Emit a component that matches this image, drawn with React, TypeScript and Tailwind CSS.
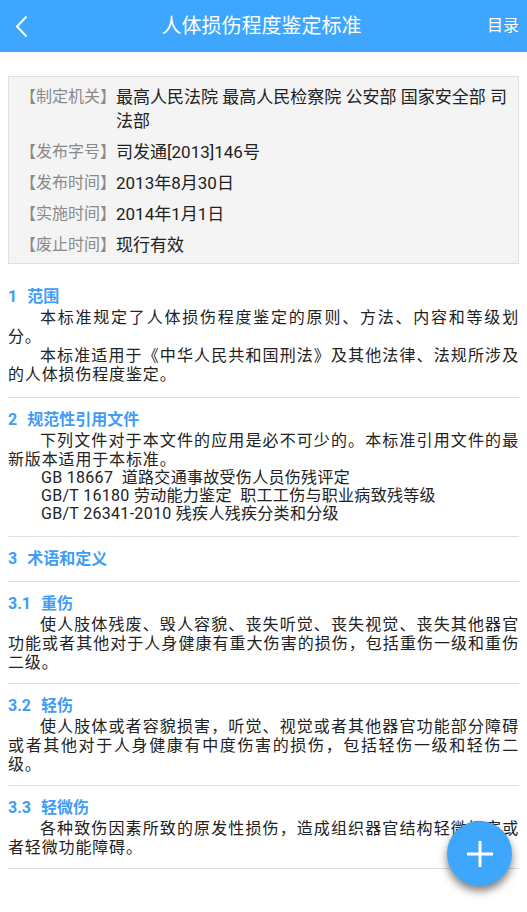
const info = [
  { label: "【制定机关】", value: "最高人民法院 最高人民检察院 公安部 国家安全部 司法部" },
  { label: "【发布字号】", value: "司发通[2013]146号" },
  { label: "【发布时间】", value: "2013年8月30日" },
  { label: "【实施时间】", value: "2014年1月1日" },
  { label: "【废止时间】", value: "现行有效" },
]

interface Section {
  no: string
  title: string
  paras: string[]
  refs?: string[]
}

const sections: Section[] = [
  {
    no: "1",
    title: "范围",
    paras: [
      "本标准规定了人体损伤程度鉴定的原则、方法、内容和等级划分。",
      "本标准适用于《中华人民共和国刑法》及其他法律、法规所涉及的人体损伤程度鉴定。",
    ],
  },
  {
    no: "2",
    title: "规范性引用文件",
    paras: ["下列文件对于本文件的应用是必不可少的。本标准引用文件的最新版本适用于本标准。"],
    refs: [
      "GB 18667  道路交通事故受伤人员伤残评定",
      "GB/T 16180 劳动能力鉴定  职工工伤与职业病致残等级",
      "GB/T 26341-2010 残疾人残疾分类和分级",
    ],
  },
  { no: "3", title: "术语和定义", paras: [] },
  {
    no: "3.1",
    title: "重伤",
    paras: ["使人肢体残废、毁人容貌、丧失听觉、丧失视觉、丧失其他器官功能或者其他对于人身健康有重大伤害的损伤，包括重伤一级和重伤二级。"],
  },
  {
    no: "3.2",
    title: "轻伤",
    paras: ["使人肢体或者容貌损害，听觉、视觉或者其他器官功能部分障碍或者其他对于人身健康有中度伤害的损伤，包括轻伤一级和轻伤二级。"],
  },
  {
    no: "3.3",
    title: "轻微伤",
    paras: ["各种致伤因素所致的原发性损伤，造成组织器官结构轻微损害或者轻微功能障碍。"],
  },
]

export default function App() {
  return (
    <div
      className="relative w-[527px] h-[912px] bg-white overflow-hidden"
      style={{ fontFamily: "Roboto, 'Noto Sans CJK SC', sans-serif" }}
    >
      {/* top bar */}
      <div className="h-[52px] bg-[#3ea7fd] flex items-center px-[8px] text-white">
        <div className="w-[40px] flex items-center pl-[7px]">
          <svg width="13" height="23" viewBox="0 0 13 23" fill="none">
            <path d="M11.5 1.5 L2 11.5 L11.5 21.5" stroke="white" strokeWidth="2" />
          </svg>
        </div>
        <div className="flex-1 text-center text-[20px] pr-[4px]">人体损伤程度鉴定标准</div>
        <div className="w-[40px] text-right text-[16px]">目录</div>
      </div>

      <div className="px-[8px]">
        {/* info box */}
        <div className="mt-[24px] bg-[#f4f4f4] border border-[#e0e0e0] pl-[11px] pr-[10px] pt-[8px] pb-[6px] flex flex-col gap-[7px] leading-[24px]">
          {info.map((row) => (
            <div key={row.label} className="flex">
              <div className="shrink-0 text-[16px] text-[#8a8a8a]">{row.label}</div>
              <div className="text-[17px] text-[#222]">{row.value}</div>
            </div>
          ))}
        </div>

        {/* sections */}
        <div className="mt-[22px]">
          {sections.map((s, i) => (
            <div
              key={s.no}
              className={
                i === 0
                  ? "pb-[13px]"
                  : i === 1
                  ? "border-t border-[#dedede] pt-[11px] pb-[13px]"
                  : "border-t border-[#dedede] pt-[11px] pb-[11px]"
              }
            >
              <div className="flex text-[16px] leading-[22px] font-bold text-[#3f9cf7]">
                <span className="mr-[10px]">{s.no}</span>
                <span>{s.title}</span>
              </div>
              {s.paras.map((p) => (
                <p
                  key={p}
                  className="text-[16px] leading-[19px] tracking-[0.85px] text-[#222] text-justify indent-[2em]"
                >
                  {p}
                </p>
              ))}
              {s.refs && (
                <div className="pl-[33px] text-[16px] leading-[18px] tracking-[0.3px] text-[#222]">
                  {s.refs.map((r) => (
                    <div key={r} className="whitespace-pre">{r}</div>
                  ))}
                </div>
              )}
            </div>
          ))}
          <div className="border-t border-[#dedede]" />
        </div>
      </div>

      {/* floating add button */}
      <button className="absolute left-[447px] top-[821px] w-[65px] h-[65px] rounded-full bg-[#3ea7fb] flex items-center justify-center shadow-[0_5px_9px_rgba(0,0,0,0.5)]">
        <svg width="28" height="28" viewBox="0 0 28 28">
          <path d="M14 1 V27 M1 14 H27" stroke="white" strokeWidth="3" />
        </svg>
      </button>
    </div>
  )
}
